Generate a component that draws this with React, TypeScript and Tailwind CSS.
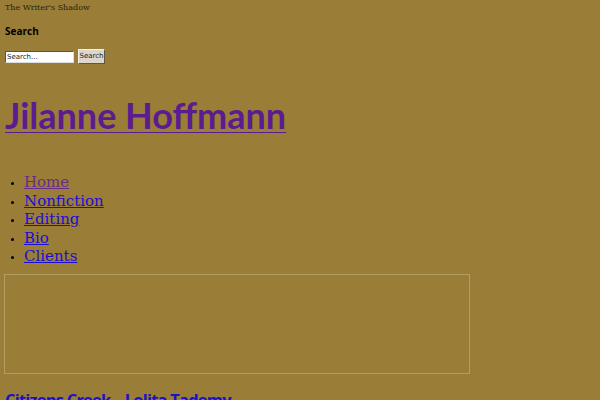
import React from "react";

const nav = [
  { label: "Home", visited: true },
  { label: "Nonfiction" },
  { label: "Editing" },
  { label: "Bio" },
  { label: "Clients" },
];

const App = () => {
  return (
    <div className="min-h-[400px] w-full bg-[#9a7d36] px-[4px] overflow-hidden">
      {/** tagline */}
      <p className="pt-[3px] pl-[1px] text-[8px] leading-[10px] text-[#2b2110] font-['DejaVu_Serif',serif]">
        The Writer&apos;s Shadow
      </p>
      {/** search widget */}
      <h2 className="mt-[12px] pl-[1px] text-[10px] font-bold leading-[12px] text-black font-['Open_Sans',sans-serif]">
        Search
      </h2>
      <div className="mt-[12px] flex items-center gap-[4px] pl-[1px]">
        <input
          type="text"
          placeholder="Search..."
          className="h-[12px] w-[69px] bg-white border border-[#5a5346] border-r-[#ddd] border-b-[#ddd] px-[1px] text-[7px] text-black placeholder:text-[#222] font-['DejaVu_Sans',sans-serif] outline-none"
        />
        <button className="h-[15px] w-[27px] bg-[#dcd6cc] border border-[#f3f0ea] border-r-[#5f5746] border-b-[#5f5746] text-[7px] leading-none text-[#222] font-['DejaVu_Sans',sans-serif]">
          Search
        </button>
      </div>
      {/** site title */}
      <h1 className="mt-[30px] pl-[1px] text-[36px] leading-[43px] font-bold text-[#5a1c8f] font-['Lato',sans-serif] tracking-[0px]">
        <a className="underline decoration-[1px] underline-offset-[3px]">
          Jilanne Hoffmann
        </a>
      </h1>
      {/** nav */}
      <ul className="mt-[36px] list-disc pl-[20px] font-['DejaVu_Serif',serif] text-[15px] leading-[18.5px]">
        {nav.map((item) => (
          <li key={item.label} className="marker:text-black marker:text-[10px]">
            <a
              className={
                item.visited
                  ? "text-[#6a2b8a] underline"
                  : "text-[#1a0ed1] underline"
              }
            >
              {item.label}
            </a>
          </li>
        ))}
      </ul>
      {/** empty slider box */}
      <div className="mt-[8px] h-[100px] w-[466px] border border-[#b39d62]"></div>
      {/** post title */}
      <h2 className="mt-[14px] pl-[1px] text-[16.5px] font-bold leading-[24px] text-[#1a12c8] font-['Open_Sans',sans-serif] tracking-[-0.8px]">
        Citizens Creek – Lolita Tademy
      </h2>
    </div>
  );
};

export default App;
